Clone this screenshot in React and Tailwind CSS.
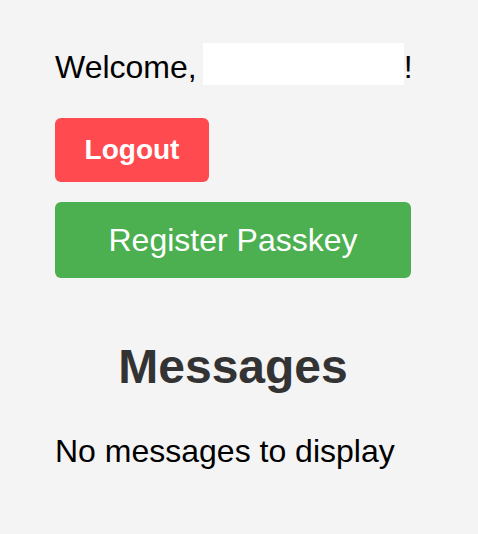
export default function App() {
  return (
    <div className="min-h-[534px] bg-[#f4f4f4] font-['Liberation_Sans',Arial,sans-serif] text-black">
      <div className="w-[356px] ml-[55px] pt-[43px]">
        <p className="text-[32px] leading-[37px] whitespace-nowrap">
          Welcome,<span className="inline-block ml-[6px] w-[201px] h-[42px] bg-white align-text-bottom" />!
        </p>

        <button className="mt-[32px] block w-[154px] h-[64px] rounded-[6px] bg-[#ff4b4f] text-white text-[28px] font-bold">
          Logout
        </button>

        <button className="mt-[20px] block w-[356px] h-[76px] rounded-[6px] bg-[#4caf50] text-white text-[32px]">
          Register Passkey
        </button>

        <h2 className="mt-[61px] text-center text-[48px] leading-[55px] font-bold text-[#333]">Messages</h2>

        <p className="mt-[39px] text-[32px] leading-[37px]">No messages to display</p>
      </div>
    </div>
  )
}
